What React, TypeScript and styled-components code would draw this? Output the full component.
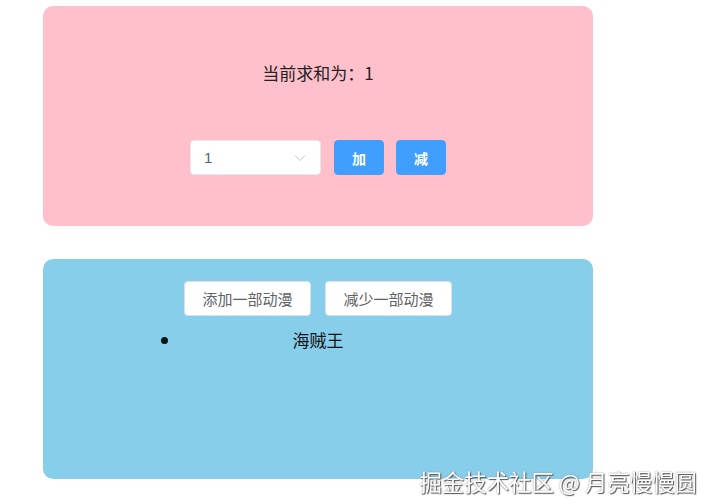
import styled, { createGlobalStyle } from "styled-components";

const GlobalStyle = createGlobalStyle`
    body {
        margin: 0;
        background: #fff;
        font-family: "Noto Sans CJK SC", "Noto Sans", sans-serif;
        color: #222;
    }
`;

const Page = styled.div`
    display: flex;
    flex-direction: column;
    gap: 33px;
    padding: 6px 0 0 43px;
`;

const Panel = styled.div<{ $bg: string }>`
    width: 550px;
    height: 220px;
    border-radius: 10px;
    background: ${(p) => p.$bg};
    display: flex;
    flex-direction: column;
    align-items: center;
`;

const Title = styled.div`
    margin-top: 55px;
    font-size: 17px;
    line-height: 24px;
    color: #222;
`;

const Controls = styled.div`
    margin-top: 55px;
    display: flex;
    gap: 12px;
    align-items: center;
`;

const Select = styled.div`
    box-sizing: border-box;
    width: 131px;
    height: 35px;
    background: #fff;
    border: 1px solid #e4e7ed;
    border-radius: 4px;
    display: flex;
    align-items: center;
    justify-content: space-between;
    padding: 0 14px 0 13px;
    margin-right: 1px;
    font-family: "Liberation Sans", Arial, sans-serif;
    font-size: 15px;
    color: #606266;
`;

const Button = styled.button<{ $primary?: boolean }>`
    box-sizing: border-box;
    height: 35px;
    padding: 0;
    width: ${(p) => (p.$primary ? "50px" : "127px")};
    border-radius: 4px;
    border: 1px solid ${(p) => (p.$primary ? "#409eff" : "#dcdfe6")};
    background: ${(p) => (p.$primary ? "#409eff" : "#fff")};
    color: ${(p) => (p.$primary ? "#fff" : "#606266")};
    font-family: "Noto Sans CJK SC", sans-serif;
    font-size: ${(p) => (p.$primary ? "14px" : "15px")};
    font-weight: ${(p) => (p.$primary ? 700 : 400)};
    cursor: pointer;
`;

const ButtonRow = styled.div`
    margin-top: 22px;
    display: flex;
    gap: 14px;
`;

const List = styled.ul`
    width: 274px;
    margin: 12px 0 0;
    padding: 0;
    list-style: disc outside;
    font-size: 17px;
    line-height: 24px;
`;

const Item = styled.li`
    text-align: center;
    color: #111;
`;

const Watermark = styled.div`
    position: fixed;
    right: 15px;
    bottom: 8px;
    font-size: 22.4px;
    line-height: 30px;
    color: #fff;
    text-shadow: 1px 1px 1px #555, 0 0 2px #888;
    pointer-events: none;
`;

const Chevron = () => (
    <svg width="12" height="8" viewBox="0 0 12 8" fill="none">
        <path d="M1 1.5 L6 6.5 L11 1.5" stroke="#c0c4cc" strokeWidth="1" />
    </svg>
);

export default function App() {
    return (
        <>
            <GlobalStyle />
            <Page>
                <Panel $bg="#ffc0cb">
                    <Title>当前求和为：1</Title>
                    <Controls>
                        <Select>
                            <span>1</span>
                            <Chevron />
                        </Select>
                        <Button $primary>加</Button>
                        <Button $primary>减</Button>
                    </Controls>
                </Panel>
                <Panel $bg="#87ceeb">
                    <ButtonRow>
                        <Button>添加一部动漫</Button>
                        <Button>减少一部动漫</Button>
                    </ButtonRow>
                    <List>
                        <Item>海贼王</Item>
                    </List>
                </Panel>
            </Page>
            <Watermark>掘金技术社区 @ 月亮慢慢圆</Watermark>
        </>
    );
}
